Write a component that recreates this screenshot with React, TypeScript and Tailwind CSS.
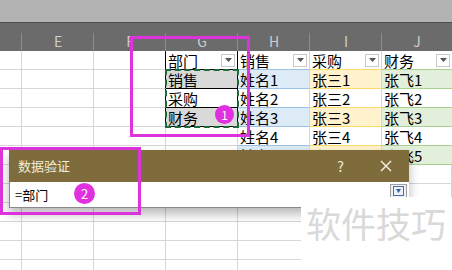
import React from "react";

const cols = [22, 72, 72, 72, 72, 72, 70];
const letters = ["", "E", "F", "G", "H", "I", "J"];

const gVals = ["部门", "销售", "采购", "财务", "", ""];

function FilterBtn() {
    return (
        <span className="ml-auto mr-[2px] w-[14px] h-[13px] border border-[#c8c8c8] bg-white flex items-center justify-center shrink-0">
            <svg width="7" height="4" viewBox="0 0 7 4">
                <path d="M0 0h7L3.5 4z" fill="#555" />
            </svg>
        </span>
    );
}

function Cell({ row, col }: { row: number; col: number }) {
    const w = cols[col];
    const base = "h-[19px] flex items-center shrink-0 overflow-hidden whitespace-nowrap text-[15px] leading-[19px] text-black";
    // empty sheet area
    if (row > 5 || col < 3) {
        const blackEdge = col === 2 && row <= 3;
        return (
            <div
                style={{ width: w }}
                className={
                    base +
                    " border-b border-[#d6d6d6] " +
                    (blackEdge ? "border-r border-r-black" : "border-r border-r-[#d6d6d6]")
                }
            />
        );
    }
    if (col === 3) {
        const txt = gVals[row];
        const grey = row === 1 || row === 3;
        const inSel = row <= 3;
        return (
            <div
                style={{ width: w }}
                className={
                    base +
                    " pl-[2px] border-r " +
                    (inSel ? "border-b border-black border-r-black " : "border-b border-[#d6d6d6] border-r-[#d6d6d6] ") +
                    (grey ? "bg-[#d9d9d9]" : "bg-white")
                }
            >
                <span>{txt}</span>
                {row === 0 && <FilterBtn />}
            </div>
        );
    }
    const odd = row % 2 === 1;
    if (col === 4) {
        return (
            <div
                style={{ width: w }}
                className={
                    base +
                    " pl-[2px] border-r border-r-[#d6d6d6] border-b border-b-[#9bc2e6] " +
                    (odd ? "bg-[#ddebf7]" : "bg-white")
                }
            >
                <span>{row === 0 ? "销售" : "姓名" + row}</span>
                {row === 0 && <FilterBtn />}
            </div>
        );
    }
    if (col === 5) {
        return (
            <div
                style={{ width: w }}
                className={
                    base +
                    " pl-[2px] border-r border-r-[#d6d6d6] border-b border-b-[#ffd966] " +
                    (odd ? "bg-[#fff2cc]" : "bg-white")
                }
            >
                <span>{row === 0 ? "采购" : "张三" + row}</span>
                {row === 0 && <FilterBtn />}
            </div>
        );
    }
    return (
        <div
            style={{ width: w }}
            className={
                base +
                " pl-[2px] border-b border-b-[#a9d08e] " +
                (odd ? "bg-[#e2efda]" : "bg-white")
            }
        >
            <span>{row === 0 ? "财务" : "张飞" + row}</span>
            {row === 0 && <FilterBtn />}
        </div>
    );
}

export default function App() {
    const rows = Array.from({ length: 12 }, (_, i) => i);
    return (
        <div
            className="relative w-[452px] h-[270px] overflow-hidden bg-white"
            style={{ fontFamily: '"Noto Sans CJK SC", "Noto Sans", sans-serif' }}
        >
            {/* ribbon remnant */}
            <div className="h-[22px] bg-[#b3b3b3]" />
            <div className="h-[1px] bg-[#4d4d4d]" />

            {/* column headers */}
            <div className="h-[28px] bg-[#6b6b6b] flex">
                {cols.map((w, i) => (
                    <div
                        key={i}
                        style={{ width: w }}
                        className="relative shrink-0 flex items-end justify-center pb-[1px]"
                    >
                        <span className="text-[14px] leading-[18px] text-[#cfcfcf]">{letters[i]}</span>
                        {i > 0 && (
                            <span className="absolute left-[-1px] bottom-0 h-[18px] w-[1px] bg-[#8c8c8c]" />
                        )}
                    </div>
                ))}
            </div>

            {/* grid */}
            <div className="flex flex-col">
                {rows.map((r) => (
                    <div key={r} className="flex">
                        {cols.map((_, c) => (
                            <Cell key={c} row={r} col={c} />
                        ))}
                    </div>
                ))}
            </div>

            {/* marching ants selection */}
            <div className="absolute left-[165px] top-[69px] w-[74px] h-[59px] border-2 border-dashed border-[#1d6b3b]" />

            {/* dialog */}
            <div className="absolute left-[9px] top-[150px] w-[400px] shadow-[0_6px_10px_rgba(0,0,0,0.28)]">
                <div className="h-[32px] bg-[#7e6c3d] flex items-center pl-[9px] text-[#f2ecdc] text-[13px]">
                    <span>数据验证</span>
                    <span className="ml-auto mr-[36px] text-[14px]">?</span>
                    <svg width="12" height="12" viewBox="0 0 12 12" className="mr-[17px]">
                        <path d="M1 1L11 11M11 1L1 11" stroke="#f2ecdc" strokeWidth="1.5" />
                    </svg>
                </div>
                <div className="h-[26px] bg-white border-l border-b border-[#8a8a8a] flex items-center pl-[5px] text-[13px] text-black">
                    <span>=部门</span>
                    <span className="ml-auto mr-[2px] w-[17px] h-[14px] border border-[#a0a0a0] bg-[#eef1f6] flex items-center justify-center self-start mt-[2px]">
                        <svg width="11" height="10" viewBox="0 0 11 10">
                            <rect x="0.5" y="0.5" width="10" height="9" fill="none" stroke="#4a6fa8" />
                            <path d="M3 3h5L5.5 7z" fill="#2f5fa8" />
                        </svg>
                    </span>
                </div>
            </div>

            {/* watermark cover */}
            <div className="absolute left-[301px] top-[197px] right-0 bottom-0 bg-white flex items-start justify-start pl-[5px] pt-[6px]">
                <span className="text-[35px] leading-[40px] text-[#d9d9d9]">软件技巧</span>
            </div>

            {/* annotations */}
            <div className="absolute left-[130px] top-[36px] w-[120px] h-[101px] border-[3px] border-[#dd33dd]" />
            <div className="absolute left-[215px] top-[105px] w-[19px] h-[19px] rounded-full bg-[#e030e0] flex items-center justify-center text-white text-[12px] leading-none">
                1
            </div>
            <div className="absolute left-0 top-[147px] w-[141px] h-[68px] border-[3px] border-[#dd33dd]" />
            <div className="absolute left-[74px] top-[183px] w-[21px] h-[21px] rounded-full bg-[#e030e0] flex items-center justify-center text-white text-[13px] leading-none">
                2
            </div>
        </div>
    );
}
